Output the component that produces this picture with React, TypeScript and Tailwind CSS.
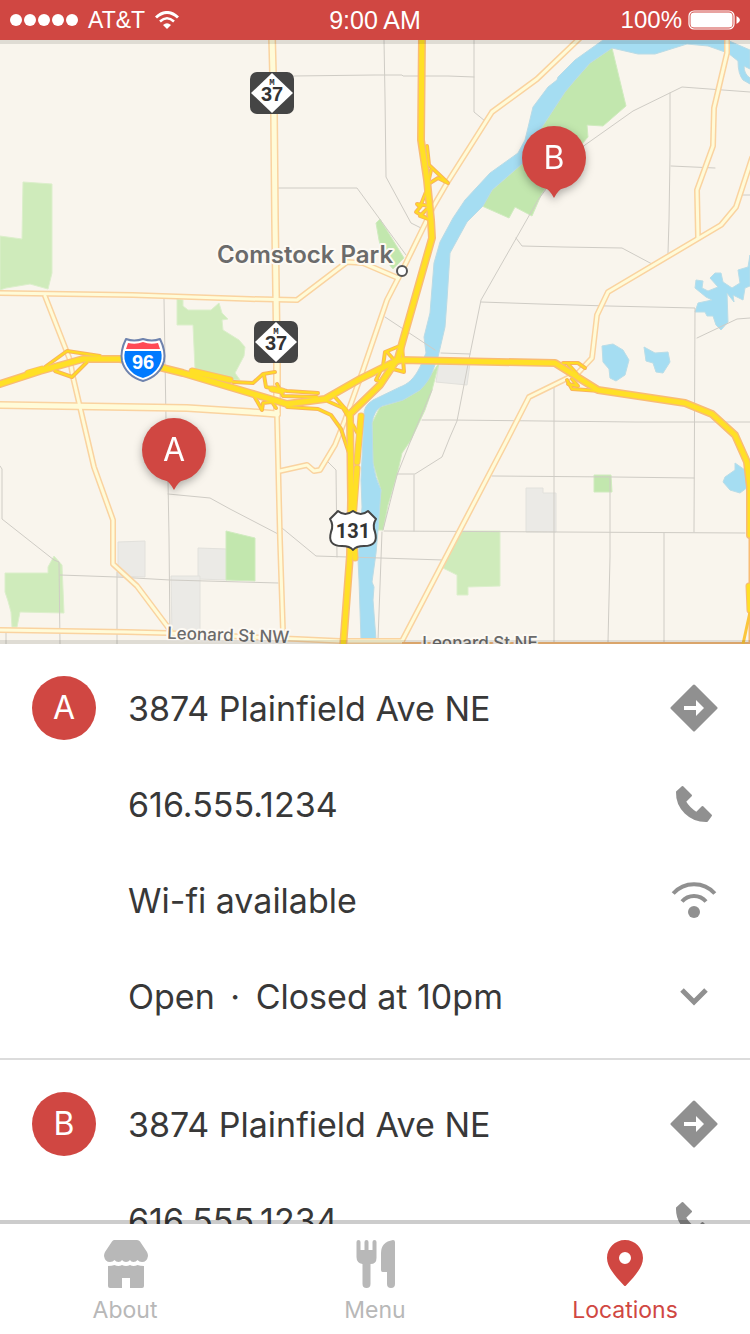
import type { ReactNode } from 'react';

const GREEN_LIGHT = [
  '23,182 52,184 52,273 48,289 30,284 6,288 0,290 0,236 22,239',
  '177,299 183,300 183,306 188,310 211,310 219,303 222,313 228,319 222,320 223,330 239,340 245,347 244,356 235,373 240,380 230,380 195,369 193,325 177,325',
  '5,573 48,573 48,567 54,556 62,565 64,613 20,612 17,627 12,627 11,612 8,601 5,592',
  '460,531 500,531 500,586 468,587 468,595 457,595 457,575 443,568',
];

const GREEN_DARK = [
  '612,48 626,106 603,126 587,125 588,137 562,167 542,193 532,216 515,207 509,218 482,206 492,190 523,163 542,127 566,90 575,80 590,63',
  '380,219 376,223 379,240 383,257 393,269 404,258',
  '439,363 432,390 425,410 411,440 402,453 397,475 388,505 383,530 376,530 381,490 373,463 372,423 380,407 403,400 420,390',
  '226,531 255,538 255,581 226,580',
  '594,475 611,475 612,492 594,492',
];

const PARCELS = [
  '118,542 145,541 145,577 118,576',
  '198,548 227,549 227,580 198,579',
  '171,576 200,576 200,636 172,636',
  '526,488 543,488 543,493 556,493 556,532 526,532',
  '439,363 470,363 467,385 436,382',
];

const RIVER =
  'M603 40 L575 60 558 77 557 80 548 87 533 107 525 140 518 153 490 173 465 200 453 218 440 242 434 263 430 313 424 337 426 353 420 367 C414 379 408 384 400 387 L373 400 Q363 406 364 416 L361 480 362 507 358 560 359 580 361 640 376 640 373 600 374 587 372 582 376 553 378 530 381 490 Q375 478 373 463 L372 423 Q374 410 382 406 L403 400 420 390 Q430 380 433 370 L438 357 445 327 447 300 450 253 467 222 483 206 492 190 523 163 542 127 565 92 575 80 590 63 612 48 638 54 655 54 687 44 708 46 728 53 738 61 Q738 74 743 80 L750 84 750 78 Q744 74 744 66 L750 69 750 50 727 40 Z';

const LAKES = [
  '602,346 613,344 623,350 629,360 625,375 616,381 610,378 609,369 603,362',
  '644,347 655,353 668,352 670,362 663,373 656,372 653,363 646,361',
  '696,280 703,281 702,288 708,291 718,287 710,278 715,273 721,273 723,282 732,288 740,283 738,270 748,267 750,255 750,286 745,288 743,300 733,295 734,302 727,293 728,322 721,330 716,325 713,316 707,316 705,312 695,312 698,303 712,300 706,297 695,288',
  '735,463 745,470 748,487 740,493 730,490 723,482 725,477 735,470',
];

const STREETS = [
  '294,76 375,75 402,75 403,76 448,76 474,77',
  '384,40 385,97 386,177 411,223 421,228',
  '474,40 474,112 485,121',
  '277,188 357,188 406,255',
  '750,92 682,87 633,111 585,145 562,167 538,200 481,300 470,354 457,421 450,437 442,457 415,474 397,474',
  '516,238 522,246 563,247 622,248 652,264',
  '670,93 670,156 669,220 668,253',
  '671,166 715,168',
  '740,195 750,195',
  '481,302 540,304 608,306 695,308 694,532',
  '697,338 737,319 750,318',
  '441,353 470,354',
  '554,387 554,642',
  '422,420 450,420 635,422 750,422',
  '492,476 614,477 694,478',
  '384,531 559,532 745,533',
  '610,478 610,557 608,642',
  '664,533 664,642',
  '414,475 414,531',
  '382,532 378,640',
  '282,528 316,556 380,558 443,560',
  '168,480 169,537 170,640',
  '168,494 210,498 230,509 280,535',
  '327,461 336,470 337,557',
  '60,575 117,577 170,580 278,583',
  '0,466 2,469 2,519 54,560 59,562 60,644',
  '117,572 117,644',
  '6,633 6,644',
  '164,299 166,420',
  '385,317 435,350',
  '383,530 397,475 411,440 432,390',
];

const ROADS = [
  '0,293 133,295 250,299 297,300 347,262 363,263 398,278',
  '45,296 70,360 73,377 83,420 94,467 113,520 113,564 137,586 170,630',
  '0,630 127,632 167,633 250,637 297,639 340,641 402,641',
  '582,36 537,79 492,112 447,183 433,207 427,220 405,265 387,300 362,373 345,420 335,445 320,470 314,471 307,465 280,471',
  '727,36 727,53 714,108 713,146 697,190 698,238',
  '752,158 736,207 721,225 608,292 597,315 592,358 578,373 529,397 507,440 402,641',
  '277,415 279,500 280,540 283,632',
];

const WIDE_ROADS = [
  '272,36 274,113 275,220 277,360 277,414',
  '0,405 187,408 250,412 277,414',
];

const RAMPS = [
  '427,146 429,165 448,183 438,178 430,183',
  '431,170 426,192 420,207 417,204 430,206 420,216 428,219 416,212 421,206',
  '402,345 385,352 383,366 376,380 382,382',
  '402,345 404,372 393,369 397,358',
  '387,352 396,362',
  '233,382 253,383 263,374 275,372',
  '264,375 266,387 287,391 318,393',
  '277,384 283,396 317,397',
  '253,394 262,410 263,403 272,402 276,408',
  '287,407 318,409 331,415 341,429 349,453',
  '325,400 343,408 350,420 358,434',
  '335,397 348,412',
  '45,367 67,351 100,356',
  '55,371 72,377 87,362',
  '563,363 578,363 585,368',
  '568,364 577,374',
  '567,380 572,389 600,391',
  '572,379 578,386 568,384',
];

const HIGHWAYS = [
  '0,384 40,371 83,359 120,359 163,368 183,373 250,393 287,404 325,399 360,379 392,363 400,360 450,361 555,363 598,390 685,403 712,414 735,435 747,462 750,487 750,535',
  '422,36 421,140 427,180 431,220 432,238 403,340 398,358 380,385 350,414 351,500 350,555 343,648',
];

const SIDE_LANES = [
  '28,373 42,369',
  '192,371 230,380',
  '361,416 357,462',
  '357,468 353,520 355,558',
  '272,389 282,391',
  '749,586 750,610',
];

function Lines({ items, color, width }: { items: string[]; color: string; width: number }) {
  return (
    <g fill="none" stroke={color} strokeWidth={width} strokeLinecap="round" strokeLinejoin="round">
      {items.map((points) => (
        <polyline key={points} points={points} />
      ))}
    </g>
  );
}

function Areas({ items, fill, stroke }: { items: string[]; fill: string; stroke: string }) {
  return (
    <g fill={fill} stroke={stroke}>
      {items.map((points) => (
        <polygon key={points} points={points} />
      ))}
    </g>
  );
}

function StateShield({ x, y }: { x: number; y: number }) {
  return (
    <g transform={`translate(${x} ${y})`} textAnchor="middle">
      <rect width="44" height="42" rx="7" fill="#454545" />
      <path d="M22 1 L43 21 22 41 1 21 Z" fill="#fff" />
      <text x="22" y="13" fontSize="9" fontWeight="700" fill="#333" className="font-['Liberation_Mono',monospace]">
        M
      </text>
      <text x="22" y="29" fontSize="20" fontWeight="700" fill="#333" className="font-['Liberation_Sans',sans-serif]">
        37
      </text>
    </g>
  );
}

function InterstateShield() {
  const outline =
    'M126 339 Q134 342 143 339 Q152 342 160 339 Q166 351 164 361 Q160 376 143 381 Q126 376 122 361 Q120 351 126 339 Z';
  return (
    <g>
      <path d={outline} fill="#fff" stroke="#6f83ad" strokeWidth="2" strokeLinejoin="round" />
      <path d="M128 343 Q136 345 143 342 Q150 345 158 343 L160 349 H126 Z" fill="#ff4a55" />
      <path d="M125 351 H161 Q163 359 159 366 Q154 375 143 378 Q132 375 127 366 Q123 359 125 351 Z" fill="#007aff" />
      <text
        x="143"
        y="369"
        fontSize="20"
        fontWeight="700"
        fill="#fff"
        textAnchor="middle"
        className="font-['Liberation_Sans',sans-serif]"
      >
        96
      </text>
    </g>
  );
}

function UsShield() {
  return (
    <g>
      <path
        d="M338 511 Q345 517 353 511 Q361 517 368 511 L376 519 Q372 525 375 532 Q379 546 364 546 Q356 546 353 550 Q350 546 342 546 Q327 546 331 532 Q334 525 330 519 Z"
        fill="#fff"
        stroke="#454545"
        strokeWidth="2"
        strokeLinejoin="round"
      />
      <text
        x="353"
        y="538"
        fontSize="20"
        fontWeight="700"
        fill="#333"
        textAnchor="middle"
        className="font-['Roboto',sans-serif]"
      >
        131
      </text>
    </g>
  );
}

function MapCanvas() {
  return (
    <svg viewBox="0 40 750 604" className="block w-full" role="img" aria-label="Map of Comstock Park">
      <rect y="40" width="750" height="604" fill="#f9f5ed" />
      <Areas items={PARCELS} fill="#ebeae6" stroke="#e2e1dc" />
      <Areas items={GREEN_LIGHT} fill="#cfebbb" stroke="#dcefcb" />
      <Areas items={GREEN_DARK} fill="#c2e7ae" stroke="#d0ebbf" />
      <path d={RIVER} fill="#a5ddf2" stroke="#b9dbe6" />
      <Areas items={LAKES} fill="#a5ddf2" stroke="#b9dde8" />
      <Lines items={STREETS} color="#cfccc5" width={1} />
      <Lines items={ROADS} color="#fad3a0" width={6} />
      <Lines items={WIDE_ROADS} color="#fad3a0" width={8} />
      <Lines items={ROADS} color="#fffbd8" width={3} />
      <Lines items={WIDE_ROADS} color="#fffbd8" width={5} />
      <polyline points="402,643 750,643" fill="none" stroke="#f3b878" strokeWidth="2" />
      <polyline points="750,535 750,644" fill="none" stroke="#f9bc74" strokeWidth="3" />
      <Lines items={RAMPS} color="#f9b45c" width={4} />
      <Lines items={SIDE_LANES} color="#f9bc74" width={7} />
      <Lines items={HIGHWAYS} color="#f9bc74" width={8} />
      <Lines items={RAMPS} color="#ffdb24" width={2} />
      <Lines items={SIDE_LANES} color="#ffe026" width={5} />
      <Lines items={HIGHWAYS} color="#ffe026" width={5} />
      <polyline points="750,612 743,644" fill="none" stroke="#fbc63c" strokeWidth="3" />
      <StateShield x={250} y={72} />
      <StateShield x={254} y={321} />
      <InterstateShield />
      <UsShield />
      <g
        className="font-['Inter',sans-serif]"
        fill="#6b6b6b"
        stroke="#fdfaf4"
        strokeWidth="4"
        strokeLinejoin="round"
        paintOrder="stroke"
        textAnchor="middle"
      >
        <text x="305" y="263" fontSize="24" fontWeight="600">
          Comstock Park
        </text>
        <text x="228" y="641" fontSize="17" fontWeight="500" transform="rotate(2 228 641)">
          Leonard St NW
        </text>
        <text x="480" y="649" fontSize="17" fontWeight="500">
          Leonard St NE
        </text>
      </g>
      <circle cx="402" cy="271" r="5" fill="#fff" stroke="#555" strokeWidth="2" />
    </svg>
  );
}

function MapPin({ letter, place }: { letter: string; place: string }) {
  return (
    <button
      type="button"
      aria-label={`Location ${letter}`}
      className={`absolute flex h-[72px] w-16 -translate-x-1/2 items-start drop-shadow-[0_3px_4px_rgba(0,0,0,0.3)] ${place}`}
    >
      <svg viewBox="0 0 64 72" className="absolute inset-0 h-[72px] w-16" fill="#d04742" aria-hidden="true">
        <circle cx="32" cy="32" r="32" />
        <path d="M22 61 Q28 64 32 72 Q36 64 42 61 Z" />
      </svg>
      <span className="relative flex h-16 flex-1 items-center justify-center text-[32px] text-white">{letter}</span>
    </button>
  );
}

function StatusBar() {
  return (
    <header className="grid h-10 shrink-0 grid-cols-3 items-center bg-[#d04742] px-2.5 font-['Liberation_Sans',Arial,sans-serif] text-2xl leading-10 text-white">
      <div className="flex items-center gap-2.5">
        <div className="flex gap-0.5" aria-label="Signal strength">
          {[0, 1, 2, 3, 4].map((dot) => (
            <span key={dot} className="size-3 rounded-full bg-white" />
          ))}
        </div>
        <span className="text-[23px]">AT&amp;T</span>
        <svg viewBox="0 0 24 18" className="h-[18px] w-6" fill="none" stroke="#fff" strokeWidth="3" aria-label="Wi-Fi">
          <path d="M1 6.500 Q12 -3.500 23 6.500" />
          <path d="M5 10.500 Q12 4 19 10.500" strokeWidth="2.500" />
          <path d="M8 14 Q12 10.500 16 14 L12 18 Z" fill="#fff" stroke="none" />
        </svg>
      </div>
      <time className="text-center text-[25px]">9:00 AM</time>
      <div className="flex items-center justify-end gap-1.5">
        <span>100%</span>
        <svg viewBox="0 0 52 20" className="h-5 w-[52px]" aria-label="Battery full">
          <rect x="1" y="1" width="45" height="18" rx="5" fill="none" stroke="#fff" strokeWidth="1.200" />
          <rect x="2.500" y="2.500" width="42" height="15" rx="3.500" fill="#fff" />
          <path d="M48.500 6 Q52 8 52 10 Q52 12 48.500 14 Z" fill="#fff" />
        </svg>
      </div>
    </header>
  );
}

function DirectionsIcon() {
  return (
    <svg viewBox="0 0 48 48" className="size-12" aria-hidden="true">
      <path d="M24 2 L46 24 24 46 2 24 Z" fill="#909090" stroke="#909090" strokeWidth="3" strokeLinejoin="round" />
      <path d="M14 22 H26 V16 L34 24 26 32 V26 H14 Z" fill="#fff" />
    </svg>
  );
}

function PhoneIcon() {
  return (
    <svg viewBox="0 0 48 48" className="size-12" aria-hidden="true">
      <path
        d="M12.500 7 L21 15.500 15 21.500 Q19 28.500 26.500 33 L32.500 27 41 35.500 37 41 C20 41.500 6.500 28 7 12 Z"
        fill="#909090"
        stroke="#909090"
        strokeWidth="2"
        strokeLinejoin="round"
      />
    </svg>
  );
}

function WifiIcon() {
  return (
    <svg viewBox="0 0 48 48" className="size-12" fill="none" stroke="#909090" strokeWidth="4" aria-hidden="true">
      <path d="M3.200 17.500 A28 28 0 0 1 44.800 17.500" />
      <path d="M12 25.500 A16 16 0 0 1 36 25.500" />
      <circle cx="24" cy="36" r="6" fill="#909090" stroke="none" />
    </svg>
  );
}

function ChevronIcon() {
  return (
    <svg viewBox="0 0 48 48" className="size-12" fill="none" stroke="#909090" strokeWidth="5" aria-hidden="true">
      <path d="M12 18 L24 30 36 18" />
    </svg>
  );
}

function Row({ badge, children, icon }: { badge?: string; children: ReactNode; icon: ReactNode }) {
  return (
    <button type="button" className="flex h-24 w-full items-center gap-8 text-left">
      <span
        className={
          badge
            ? 'flex size-16 shrink-0 items-center justify-center rounded-full bg-[#d04742] text-[32px] text-white'
            : 'size-16 shrink-0'
        }
      >
        {badge}
      </span>
      <span className="flex-1">{children}</span>
      {icon}
    </button>
  );
}

function LocationCard({ letter }: { letter: string }) {
  return (
    <article className="border-b-2 border-[#dcdcdc] px-8 pt-4 pb-3.5">
      <Row badge={letter} icon={<DirectionsIcon />}>
        3874 Plainfield Ave NE
      </Row>
      <Row icon={<PhoneIcon />}>616.555.1234</Row>
      <Row icon={<WifiIcon />}>Wi-fi available</Row>
      <Row icon={<ChevronIcon />}>
        Open <span className="mx-1.5">·</span> Closed at 10pm
      </Row>
    </article>
  );
}

function StoreIcon() {
  return (
    <svg viewBox="0 0 48 48" className="size-12" fill="currentColor" aria-hidden="true">
      <path d="M13 0 H36 Q38 0 39 1.500 L46 12 Q47 14 47 16 Q46 22 41 22 Q38 22 36.500 20 Q35 22 32.500 22 Q30 22 29 20 Q27.500 22 25 22 Q22.500 22 21 20 Q20 22 17.500 22 Q15 22 13.500 20 Q12 22 9 22 Q4 22 3 16 Q3 14 4 12 L11 1.500 Q12 0 13 0 Z" />
      <path d="M7 26 Q11 26 13.500 25 Q17.500 27 21 25 Q25 27 29 25 Q32.500 27 36.500 25 Q39 26 43 26 V46 Q43 48 41 48 H29 V38 H21 V48 H9 Q7 48 7 46 Z" />
    </svg>
  );
}

function MenuIcon() {
  return (
    <svg viewBox="0 0 48 48" className="size-12" fill="currentColor" aria-hidden="true">
      <path d="M5.500 2 Q5.500 0 7.500 0 Q9.500 0 9.500 2 V10 H13.500 V2 Q13.500 0 15.500 0 Q17.500 0 17.500 2 V10 H21.500 V2 Q21.500 0 23.500 0 Q25.500 0 25.500 2 V18 Q25.500 24 19.500 24 V44 Q19.500 48 15.500 48 Q11.500 48 11.500 44 V24 Q5.500 23 5.500 17 Z" />
      <path d="M42 0 Q44 0 44 2 V44 Q44 48 40 48 Q36 48 36 44 V32 H31.500 Q30 32 30 30 V13 Q30 2 42 0 Z" />
    </svg>
  );
}

function LocationsIcon() {
  return (
    <svg viewBox="0 0 48 48" className="size-12" fill="currentColor" aria-hidden="true">
      <path
        fillRule="evenodd"
        d="M24 0 C14 0 6 8 6 18 C6 27 14 36 23 45.500 Q24 46.500 25 45.500 C34 36 42 27 42 18 C42 8 34 0 24 0 Z M24 12 A6 6 0 1 1 24 24 A6 6 0 1 1 24 12 Z"
      />
    </svg>
  );
}

function Tab({ label, icon, active = false }: { label: string; icon: ReactNode; active?: boolean }) {
  return (
    <a
      href={`#${label.toLowerCase()}`}
      aria-current={active ? 'page' : undefined}
      className={`flex flex-1 flex-col items-center gap-1.5 pt-4 ${active ? 'text-[#d04742]' : 'text-[#b8b8b8]'}`}
    >
      {icon}
      <span className="text-[23px] leading-8">{label}</span>
    </a>
  );
}

export default function App() {
  return (
    <div className="flex h-screen flex-col bg-white font-['Inter','Noto_Sans',sans-serif] text-[34px] text-[#383838]">
      <StatusBar />
      <section className="relative shrink-0 overflow-hidden" aria-label="Map">
        <MapCanvas />
        <div className="pointer-events-none absolute inset-0 border-y-4 border-black/10" />
        <MapPin letter="A" place="left-[23.2%] top-[62.6%]" />
        <MapPin letter="B" place="left-[73.87%] top-[14.24%]" />
      </section>
      <div className="relative flex min-h-0 flex-1 flex-col">
        <main className="min-h-0 flex-1 overflow-y-auto [scrollbar-width:none]">
          <LocationCard letter="A" />
          <LocationCard letter="B" />
        </main>
        <div className="pointer-events-none absolute inset-x-0 bottom-0 h-1 bg-black/20" />
      </div>
      <nav className="flex h-[110px] shrink-0 bg-white" aria-label="Main">
        <Tab label="About" icon={<StoreIcon />} />
        <Tab label="Menu" icon={<MenuIcon />} />
        <Tab label="Locations" icon={<LocationsIcon />} active />
      </nav>
    </div>
  );
}
